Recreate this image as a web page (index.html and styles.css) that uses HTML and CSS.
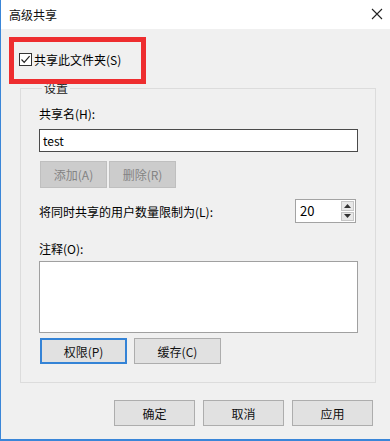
FILE: index.html
```html
<!DOCTYPE html>
<html>
<head>
<meta charset="utf-8">
<link rel="stylesheet" href="styles.css">
</head>
<body>
<div class="window">
  <div class="titlebar">
    <span class="title">高级共享</span>
    <svg class="close" width="12" height="12" viewBox="0 0 12 12"><path d="M1 1 L11 11 M11 1 L1 11" stroke="#222" stroke-width="1.1" fill="none"/></svg>
  </div>
  <div class="check-row">
    <span class="checkbox"><svg width="11" height="11" viewBox="0 0 11 11"><path d="M1.5 5.5 L4.2 8.3 L9.6 2.2" stroke="#222" stroke-width="1.2" fill="none"/></svg></span>
    <span>共享此文件夹(S)</span>
  </div>
  <div class="group">
    <span class="legend">设置</span>
    <div class="label first">共享名(H):</div>
    <div class="input">test</div>
    <div class="btn-row small">
      <div class="btn disabled w67">添加(A)</div>
      <div class="btn disabled w67">删除(R)</div>
    </div>
    <div class="limit-row">
      <span>将同时共享的用户数量限制为(L):</span>
      <div class="spin">
        <span class="spin-val">20</span>
        <div class="spin-btns">
          <div class="spin-btn"><svg width="7" height="4" viewBox="0 0 7 4"><path d="M0 4 L3.5 0 L7 4 Z" fill="#333"/></svg></div>
          <div class="spin-btn"><svg width="7" height="4" viewBox="0 0 7 4"><path d="M0 0 L3.5 4 L7 0 Z" fill="#333"/></svg></div>
        </div>
      </div>
    </div>
    <div class="label note">注释(O):</div>
    <div class="textarea"></div>
    <div class="btn-row perm">
      <div class="btn focused w87">权限(P)</div>
      <div class="btn w87">缓存(C)</div>
    </div>
  </div>
  <div class="footer">
    <div class="btn w81">确定</div>
    <div class="btn w81">取消</div>
    <div class="btn w81">应用</div>
  </div>
  <div class="highlight"></div>
</div>
</body>
</html>
```
FILE: styles.css
```css
html, body {
  margin: 0;
  padding: 0;
  background: #f0f0f0;
  overflow: hidden;
}
body {
  font-family: "Noto Sans CJK SC", "Noto Sans", sans-serif;
  font-size: 12px;
  color: #000;
}
.window {
  position: relative;
  width: 390px;
  height: 441px;
  box-sizing: border-box;
  border-left: 1px solid #3a86d8;
  border-bottom: 2px solid #3a86d8;
  background: #f0f0f0;
}
.titlebar {
  height: 29px;
  background: #fff;
  display: flex;
  align-items: center;
  justify-content: space-between;
  padding: 0 7px 0 8px;
}
.title {
  font-size: 12px;
  line-height: 17px;
  color: #111;
}
.close {
  display: block;
  margin-top: -1px;
}
.check-row {
  margin: 22px 0 0 18px;
  height: 17px;
  line-height: 17px;
  display: flex;
  align-items: center;
  gap: 2px;
}
.checkbox {
  width: 11px;
  height: 11px;
  border: 1px solid #333;
  background: #fff;
  display: flex;
  align-items: center;
  justify-content: center;
}
.checkbox svg { display: block; }
.group {
  margin: 20px 14px 0 19px;
  border: 1px solid #dcdcdc;
  padding: 0 16px 18px 18px;
  display: flex;
  flex-direction: column;
  align-items: flex-start;
}
.legend {
  margin: -10px 0 0 3px;
  padding: 0 2px;
  background: #f0f0f0;
  line-height: 17px;
  height: 17px;
  color: #222;
}
.label {
  line-height: 17px;
  height: 17px;
}
.label.first { margin-top: 9px; }
.label.note { margin-top: 17px; }
.input {
  margin-top: 7px;
  width: 319px;
  height: 23px;
  box-sizing: border-box;
  border: 1px solid #4a4a4a;
  background: #fff;
  padding-left: 3px;
  line-height: 21px;
}
.btn-row {
  display: flex;
  margin-left: 1px;
}
.btn-row.small { margin-top: 9px; gap: 2px; }
.btn-row.perm { margin-top: 5px; gap: 7px; }
.btn {
  box-sizing: border-box;
  height: 26px;
  border: 1px solid #adadad;
  background: #e1e1e1;
  display: flex;
  align-items: center;
  justify-content: center;
  color: #111;
}
.btn.w67 { width: 67px; height: 27px; }
.btn.w87 { width: 87px; }
.btn.w81 { width: 81px; }
.btn.disabled {
  background: #cccccc;
  border-color: #bfbfbf;
  color: #838383;
}
.btn.focused {
  border: 2px solid #3483d6;
}
.limit-row {
  margin-top: 11px;
  width: 319px;
  display: flex;
  align-items: center;
  justify-content: space-between;
  line-height: 17px;
}
.spin {
  width: 61px;
  height: 24px;
  box-sizing: border-box;
  border: 1px solid #a3a3a3;
  background: #fff;
  margin-right: 2px;
  display: flex;
  justify-content: space-between;
}
.spin-val {
  padding-left: 4px;
  line-height: 22px;
  font-size: 13px;
}
.spin-btns {
  width: 13px;
  padding: 1px;
  display: flex;
  flex-direction: column;
  gap: 1px;
}
.spin-btn {
  flex: 1;
  background: #e8e8e8;
  border: 1px solid #c6c6c6;
  display: flex;
  align-items: center;
  justify-content: center;
}
.spin-btn svg { display: block; }
.textarea {
  margin-top: 4px;
  width: 319px;
  height: 72px;
  box-sizing: border-box;
  border: 1px solid #a0a0a0;
  background: #fff;
}
.footer {
  margin: 17px 17px 0 0;
  display: flex;
  justify-content: flex-end;
  gap: 8px;
}
.highlight {
  position: absolute;
  left: 8px;
  top: 37px;
  width: 137px;
  height: 47px;
  box-sizing: border-box;
  border: 5px solid #ee2d2f;
}
```
